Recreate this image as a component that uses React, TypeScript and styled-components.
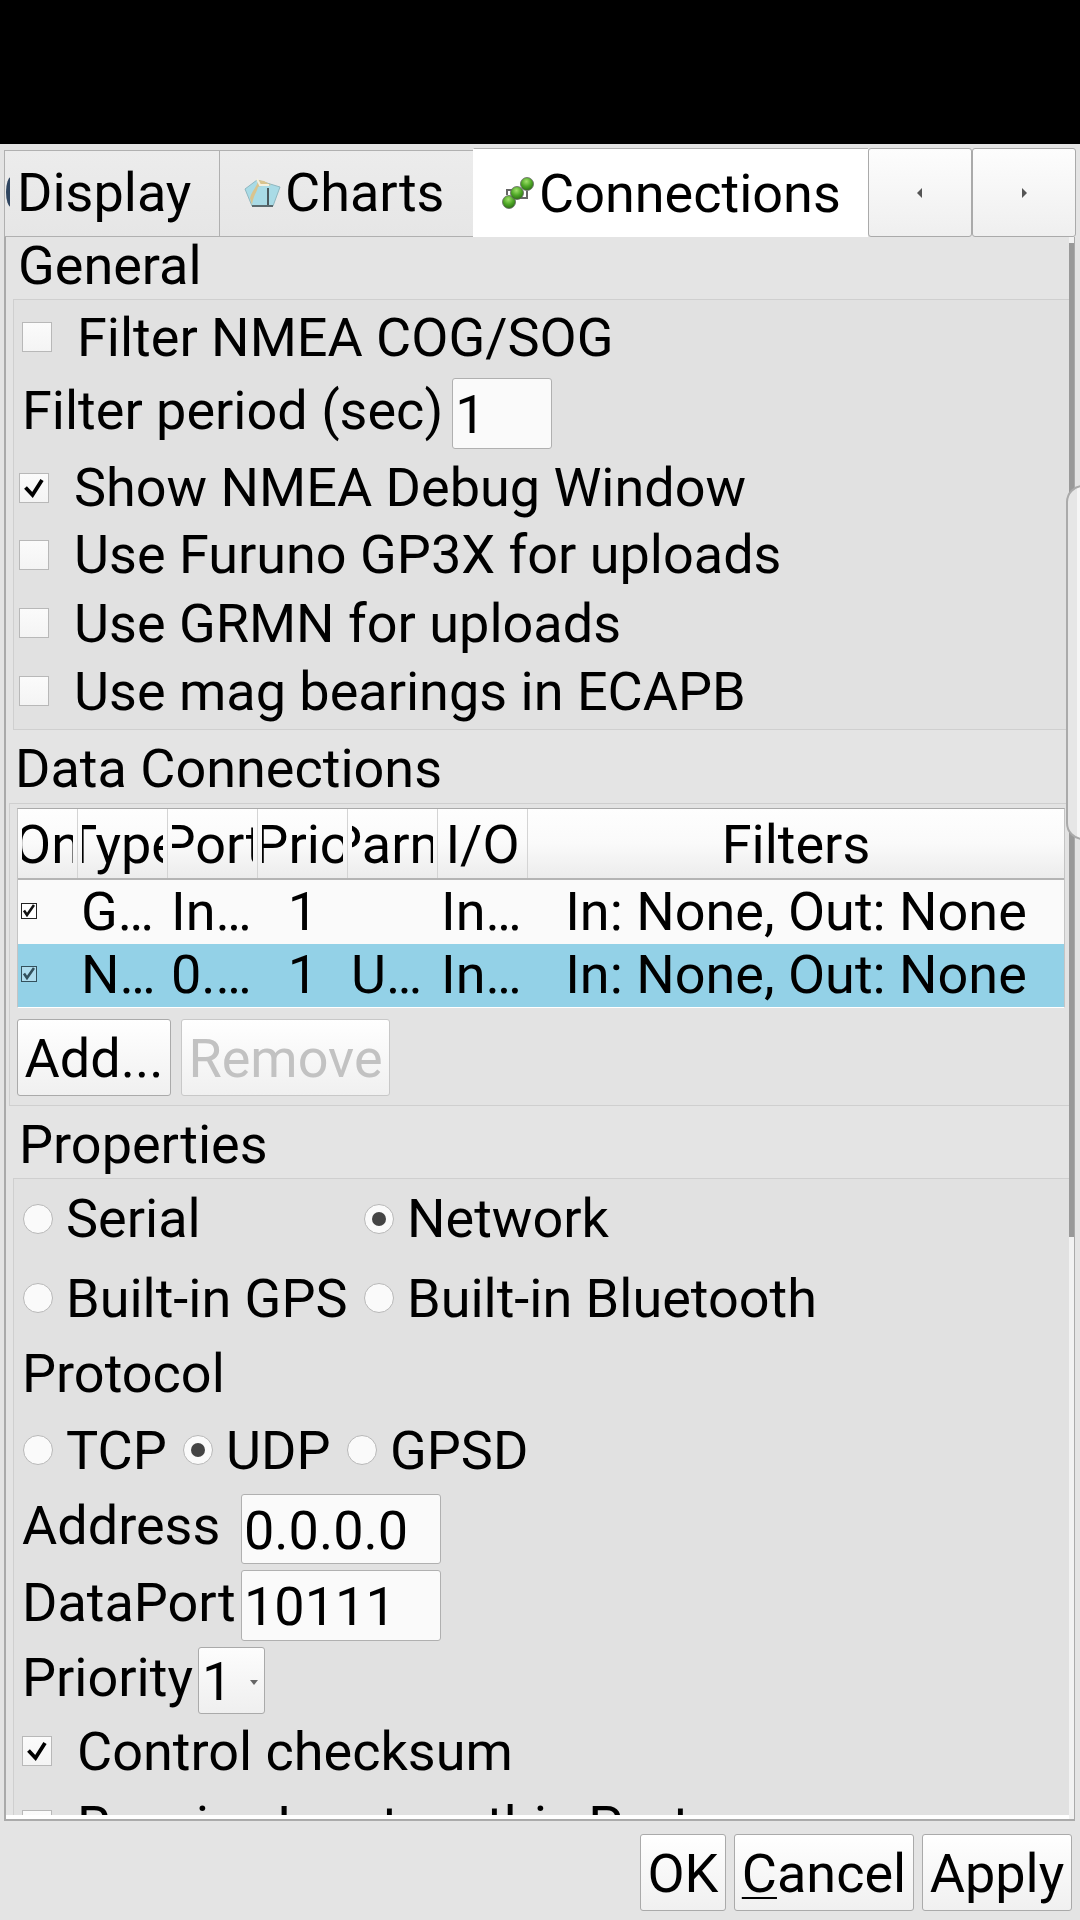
import React from 'react'
import styled, { createGlobalStyle } from 'styled-components'

const GlobalStyle = createGlobalStyle`
  html, body {
    margin: 0;
    padding: 0;
    background: #e4e4e4;
  }
  * {
    box-sizing: border-box;
  }
`

const Page = styled.div`
  position: relative;
  width: 1080px;
  height: 1920px;
  overflow: hidden;
  display: flex;
  flex-direction: column;
  background: #e4e4e4;
  color: #000;
  font-family: Roboto, "Liberation Sans", sans-serif;
  font-size: 54px;
  line-height: 52px;
`

const StatusBar = styled.div`
  height: 144px;
  flex-shrink: 0;
  background: #000;
`

const TabBar = styled.div`
  height: 93px;
  flex-shrink: 0;
  display: flex;
  align-items: flex-end;
  padding-left: 4px;
`

const Tab = styled.div<{ $w: number; $active?: boolean; $pl: number }>`
  width: ${p => p.$w}px;
  height: ${p => (p.$active ? 89 : 87)}px;
  display: flex;
  align-items: center;
  overflow: hidden;
  white-space: nowrap;
  padding-left: ${p => p.$pl}px;
  padding-bottom: ${p => (p.$active ? 0 : 3)}px;
  background: ${p => (p.$active ? '#fff' : 'linear-gradient(#ececec, #e6e6e6)')};
  border-top: 1px solid #b0b0b0;
  border-left: 1px solid ${p => (p.$active ? '#fff' : '#b0b0b0')};
  border-bottom: ${p => (p.$active ? 'none' : '1px solid #b0b0b0')};
`

const TabArrow = styled.div`
  width: 104px;
  height: 89px;
  display: flex;
  align-items: center;
  justify-content: center;
  background: linear-gradient(#fdfdfd, #efefef);
  border: 1px solid #aaa;
  border-radius: 3px;
`

const Panel = styled.div`
  width: 1071px;
  height: 1584px;
  margin-left: 4px;
  flex-shrink: 0;
  display: flex;
  border-left: 2px solid #aaa;
  border-right: 1px solid #aaa;
  border-bottom: 2px solid #aaa;
`

const ScrollArea = styled.div`
  flex: 1;
  min-width: 0;
  overflow: hidden;
  border-bottom: 4px solid #fff;
`

const ScrollTrack = styled.div`
  width: 5px;
  flex-shrink: 0;
  padding-top: 6px;
  background: #f2f2f2;
`

const ScrollThumb = styled.div`
  height: 994px;
  background: #999;
`

const SectionTitle = styled.div<{ $h: number; $pt: number; $x: number }>`
  height: ${p => p.$h}px;
  padding-top: ${p => p.$pt}px;
  padding-left: ${p => p.$x}px;
`

const SectionBody = styled.div<{ $inset: number }>`
  margin-left: ${p => p.$inset}px;
  background: #e1e1e1;
  border-top: 1px solid #cfcfcf;
  border-left: 1px solid #cfcfcf;
`

const GeneralBody = styled(SectionBody)`
  padding-bottom: 4px;
  border-bottom: 1px solid #cfcfcf;
`

const ConnectionsBody = styled(SectionBody)`
  padding: 4px 0 9px 7px;
  background: #e3e3e3;
  border-bottom: 1px solid #cfcfcf;
`

const Row = styled.div<{ $h: number; $mt?: number; $pl?: number }>`
  height: ${p => p.$h}px;
  margin-top: ${p => p.$mt ?? 0}px;
  padding-left: ${p => p.$pl ?? 8}px;
  display: flex;
  align-items: center;
  white-space: nowrap;
`

// the glyphs sit a little low in the reference, hence the top padding
const Label = styled.span<{ $lift?: number; $w?: number }>`
  padding-top: 2px;
  margin-bottom: ${p => (p.$lift ?? 0) * 2}px;
  ${p => (p.$w ? `width: ${p.$w}px; flex-shrink: 0;` : '')}
`

const Box = styled.span`
  width: 30px;
  height: 30px;
  flex-shrink: 0;
  display: flex;
  align-items: center;
  justify-content: center;
  margin-right: 25px;
  background: linear-gradient(#fbfbfb, #f4f4f4);
  border: 1px solid #b8b8b8;
`

const Radio = styled.span<{ $on?: boolean }>`
  width: 30px;
  height: 30px;
  flex-shrink: 0;
  border-radius: 50%;
  margin-right: 13px;
  display: flex;
  align-items: center;
  justify-content: center;
  background: #fafafa;
  border: 1px solid #b8b8b8;
  &::after {
    content: '';
    display: ${p => (p.$on ? 'block' : 'none')};
    width: 14px;
    height: 14px;
    border-radius: 50%;
    background: #444;
  }
`

const RadioCell = styled.div<{ $w?: number }>`
  ${p => (p.$w ? `width: ${p.$w}px;` : '')}
  flex-shrink: 0;
  display: flex;
  align-items: center;
`

const TextInput = styled.div<{ $w: number; $h: number; $x?: number }>`
  width: ${p => p.$w}px;
  height: ${p => p.$h}px;
  margin-left: ${p => p.$x ?? 0}px;
  flex-shrink: 0;
  padding: 3px 0 0 2px;
  display: flex;
  align-items: center;
  background: #fafafa;
  border: 1px solid #b0b0b0;
  border-radius: 3px;
`

const Select = styled.div`
  width: 67px;
  height: 67px;
  margin-left: 5px;
  flex-shrink: 0;
  position: relative;
  padding: 3px 0 0 3px;
  display: flex;
  align-items: center;
  background: linear-gradient(#fdfdfd, #efefef);
  border: 1px solid #aaa;
  border-radius: 3px;
`

const SelectArrow = styled.span`
  position: absolute;
  right: 6px;
  top: 32px;
  width: 0;
  height: 0;
  border-left: 4px solid transparent;
  border-right: 4px solid transparent;
  border-top: 5px solid #666;
`

const Table = styled.div`
  width: 1048px;
  background: #fafafa;
  border-top: 1px solid #aaa;
  border-left: 1px solid #c4c4c4;
  border-right: 1px solid #c4c4c4;
  border-bottom: 1px solid #fff;
`

const HeaderRow = styled.div`
  height: 71px;
  display: grid;
  grid-template-columns: 60px 90px 90px 90px 90px 90px 1fr;
  background: linear-gradient(#fefefe, #fafafa 50%, #ececec);
  border-bottom: 2px solid #b4b4b4;
`

const HeaderCell = styled.div<{ $last?: boolean }>`
  min-width: 0;
  padding: 0 4px;
  border-right: ${p => (p.$last ? 'none' : '1px solid #d4d4d4')};
`

const HeaderText = styled.div`
  height: 100%;
  overflow: hidden;
  display: flex;
  align-items: center;
  justify-content: center;
  white-space: nowrap;
  padding-top: 3px;
`

const DataRow = styled.div<{ $selected?: boolean }>`
  height: ${p => (p.$selected ? 63 : 64)}px;
  display: grid;
  grid-template-columns: 60px 90px 90px 90px 90px 90px 1fr;
  align-items: center;
  white-space: nowrap;
  padding-bottom: 1px;
  background: ${p => (p.$selected ? '#93d1e7' : '#fafafa')};
`

const DataCell = styled.div<{ $center?: boolean; $pl?: number }>`
  min-width: 0;
  padding-left: ${p => (p.$center ? 0 : p.$pl ?? 3)}px;
  text-align: ${p => (p.$center ? 'center' : 'left')};
`

const TinyBox = styled.span<{ $dim?: boolean }>`
  display: block;
  width: 16px;
  height: 16px;
  margin-left: 3px;
  margin-top: -2px;
  background: ${p => (p.$dim ? 'rgba(255, 255, 255, 0.25)' : '#fff')};
  border: 1.5px solid ${p => (p.$dim ? '#33505c' : '#222')};
`

const ButtonRow = styled.div`
  display: flex;
  gap: 10px;
  margin-top: 11px;
`

const Button = styled.div<{ $w: number; $disabled?: boolean }>`
  width: ${p => p.$w}px;
  height: 77px;
  flex-shrink: 0;
  display: flex;
  align-items: center;
  justify-content: center;
  padding-top: 2px;
  white-space: nowrap;
  color: ${p => (p.$disabled ? '#c2c2c2' : '#000')};
  background: linear-gradient(#ffffff, #f0f0f0);
  border: 1px solid ${p => (p.$disabled ? '#c8c8c8' : '#aaa')};
  border-radius: 3px;
`

const Accel = styled.span`
  text-decoration: underline;
  text-decoration-thickness: 2px;
  text-underline-offset: 5px;
`

const Footer = styled.div`
  display: flex;
  justify-content: flex-end;
  gap: 8px;
  padding: 13px 8px 0 0;
`

const EdgeHandle = styled.div`
  position: absolute;
  right: -20px;
  top: 485px;
  width: 34px;
  height: 355px;
  background: linear-gradient(90deg, #e6e6e6 0 9px, #f6f6f6 9px);
  border: 2px solid #aaa;
  border-radius: 20px;
`

const Check = () => (
  <svg width="22" height="22" viewBox="0 0 22 22">
    <path d="M2.5 10.5 L9.5 18 L19 3" fill="none" stroke="#000" strokeWidth="3.8" />
  </svg>
)

const TinyCheck = ({ color }: { color: string }) => (
  <svg width="13" height="13" viewBox="0 0 13 13" style={{ display: 'block' }}>
    <path d="M2 6.5 L5 11 L12 1" fill="none" stroke={color} strokeWidth="2.6" />
  </svg>
)

const DisplaySliver = () => (
  <svg width="5" height="30" viewBox="0 0 5 30" style={{ marginRight: 7, flexShrink: 0 }}>
    <ellipse cx="6" cy="15" rx="5" ry="15" fill="#2f4560" />
  </svg>
)

const ChartsIcon = () => (
  <svg width="37" height="29" viewBox="0 0 37 29" style={{ marginRight: 4, flexShrink: 0 }}>
    <path d="M1 11 L13 2 L36 9 L29 28 L8 28 Z" fill="#a9dbe6" stroke="#8fb7c0" strokeWidth="1" />
    <path d="M8 27 C9 18 13 14 14 9 C17 7 22 9 27 7 L20 3 L14 2 C14 8 8 12 6 20 Z" fill="#d9c48e" />
    <path d="M13 1 L16 7 L25 7" fill="none" stroke="#f4f0df" strokeWidth="2" />
    <path d="M24 10 L24 27" stroke="#4b5a5e" strokeWidth="2" />
    <path d="M8 28 L29 28" stroke="#5b6a6e" strokeWidth="2" />
  </svg>
)

const ConnectionsIcon = () => (
  <svg width="32" height="33" viewBox="0 0 32 33" style={{ marginRight: 5, flexShrink: 0 }}>
    <defs>
      <radialGradient id="ball" cx="45%" cy="30%" r="70%">
        <stop offset="0%" stopColor="#9fe06a" />
        <stop offset="55%" stopColor="#4ea726" />
        <stop offset="100%" stopColor="#2c6d16" />
      </radialGradient>
    </defs>
    <path d="M5 18 L5 13 L14 13 M15 21 L25 21 L25 14" fill="none" stroke="#666" strokeWidth="2" />
    <circle cx="7" cy="25" r="6.5" fill="url(#ball)" stroke="#666" strokeWidth="0.8" />
    <circle cx="15" cy="16" r="6.5" fill="url(#ball)" stroke="#666" strokeWidth="0.8" />
    <circle cx="25" cy="7" r="6.5" fill="url(#ball)" stroke="#666" strokeWidth="0.8" />
  </svg>
)

const Triangle = ({ dir }: { dir: 'left' | 'right' }) => (
  <svg width="6" height="10" viewBox="0 0 6 10">
    <path d={dir === 'left' ? 'M5 0 L5 10 L0 5 Z' : 'M1 0 L1 10 L6 5 Z'} fill="#555" />
  </svg>
)

const CheckRow = ({ label, checked, boxX, h, lift }: { label: string; checked?: boolean; boxX: number; h: number; lift?: number }) => (
  <Row $h={h} $pl={boxX}>
    <Box>{checked && <Check />}</Box>
    <Label $lift={lift}>{label}</Label>
  </Row>
)

const headers = ['On', 'Type', 'Port', 'Prio', 'Parm', 'I/O', 'Filters']

const rows = [
  { type: 'G…', port: 'In…', prio: '1', parm: '', io: 'In…' },
  { type: 'N…', port: '0.…', prio: '1', parm: 'U…', io: 'In…', selected: true }
]

export default function App() {
  return (
    <Page>
      <GlobalStyle />
      <StatusBar />
      <TabBar>
        <Tab $w={215} $pl={0}>
          <DisplaySliver />
          <Label>Display</Label>
        </Tab>
        <Tab $w={254} $pl={24}>
          <ChartsIcon />
          <Label>Charts</Label>
        </Tab>
        <Tab $w={395} $pl={28} $active>
          <ConnectionsIcon />
          <Label>Connections</Label>
        </Tab>
        <TabArrow>
          <Triangle dir="left" />
        </TabArrow>
        <TabArrow>
          <Triangle dir="right" />
        </TabArrow>
      </TabBar>

      <Panel>
        <ScrollArea>
          <SectionTitle $h={62} $pt={3} $x={12}>General</SectionTitle>
          <GeneralBody $inset={7}>
            <CheckRow label="Filter NMEA COG/SOG" boxX={8} h={73} />
            <Row $h={81}>
              <Label $lift={4}>Filter period (sec)</Label>
              <TextInput $w={100} $h={71} $x={9}>1</TextInput>
            </Row>
            <CheckRow label="Show NMEA Debug Window" checked boxX={5} h={67} lift={1} />
            <CheckRow label="Use Furuno GP3X for uploads" boxX={5} h={68} lift={1} />
            <CheckRow label="Use GRMN for uploads" boxX={5} h={68} />
            <CheckRow label="Use mag bearings in ECAPB" boxX={5} h={68} />
          </GeneralBody>

          <SectionTitle $h={73} $pt={13} $x={9}>Data Connections</SectionTitle>
          <ConnectionsBody $inset={3}>
            <Table>
              <HeaderRow>
                {headers.map((h, i) => (
                  <HeaderCell key={h} $last={i === headers.length - 1}>
                    <HeaderText>{h}</HeaderText>
                  </HeaderCell>
                ))}
              </HeaderRow>
              {rows.map(r => (
                <DataRow key={r.type} $selected={r.selected}>
                  <DataCell $pl={0}>
                    <TinyBox $dim={r.selected}>
                      <TinyCheck color={r.selected ? '#33505c' : '#111'} />
                    </TinyBox>
                  </DataCell>
                  <DataCell>{r.type}</DataCell>
                  <DataCell>{r.port}</DataCell>
                  <DataCell $center>{r.prio}</DataCell>
                  <DataCell>{r.parm}</DataCell>
                  <DataCell>{r.io}</DataCell>
                  <DataCell $center>In: None, Out: None</DataCell>
                </DataRow>
              ))}
            </Table>
            <ButtonRow>
              <Button $w={154}>Add...</Button>
              <Button $w={209} $disabled>Remove</Button>
            </ButtonRow>
          </ConnectionsBody>

          <SectionTitle $h={72} $pt={13} $x={13}>Properties</SectionTitle>
          <SectionBody $inset={7}>
            <Row $h={79} $pl={9}>
              <RadioCell $w={341}><Radio /><Label $lift={1}>Serial</Label></RadioCell>
              <RadioCell><Radio $on /><Label $lift={1}>Network</Label></RadioCell>
            </Row>
            <Row $h={80} $pl={9}>
              <RadioCell $w={341}><Radio /><Label>Built-in GPS</Label></RadioCell>
              <RadioCell><Radio /><Label>Built-in Bluetooth</Label></RadioCell>
            </Row>
            <Row $h={68}><Label $lift={-1}>Protocol</Label></Row>
            <Row $h={88} $pl={9}>
              <RadioCell $w={160}><Radio /><Label>TCP</Label></RadioCell>
              <RadioCell $w={164}><Radio $on /><Label>UDP</Label></RadioCell>
              <RadioCell><Radio /><Label>GPSD</Label></RadioCell>
            </Row>
            <Row $h={70}>
              <Label $lift={4} $w={219}>Address</Label>
              <TextInput $w={200} $h={70}>0.0.0.0</TextInput>
            </Row>
            <Row $h={71} $mt={6}>
              <Label $lift={4} $w={219}>DataPort</Label>
              <TextInput $w={200} $h={71}>10111</TextInput>
            </Row>
            <Row $h={67} $mt={6}>
              <Label $lift={4}>Priority</Label>
              <Select>1<SelectArrow /></Select>
            </Row>
            <CheckRow label="Control checksum" checked boxX={8} h={74} />
            <CheckRow label="Receive Input on this Port" boxX={8} h={74} />
          </SectionBody>
        </ScrollArea>
        <ScrollTrack>
          <ScrollThumb />
        </ScrollTrack>
      </Panel>

      <Footer>
        <Button $w={86}>OK</Button>
        <Button $w={180}><Accel>C</Accel>ancel</Button>
        <Button $w={150}>Apply</Button>
      </Footer>

      <EdgeHandle />
    </Page>
  )
}
